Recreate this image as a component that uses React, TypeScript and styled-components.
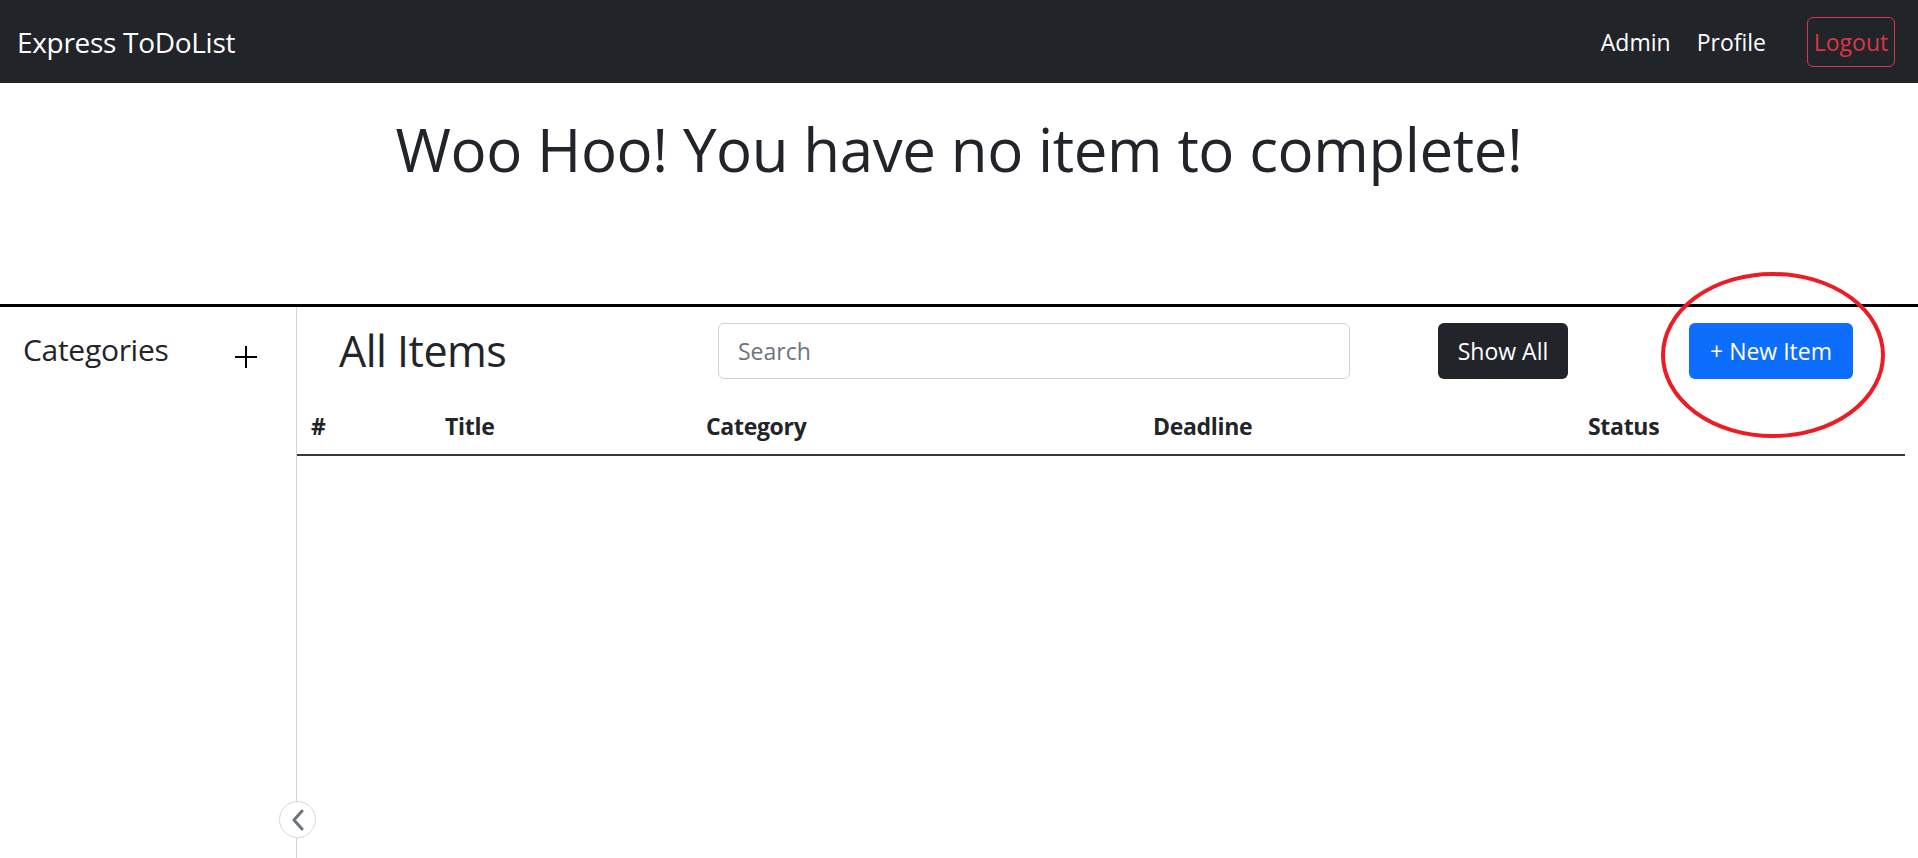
import React from 'react';
import styled, { createGlobalStyle } from 'styled-components';

const GlobalStyle = createGlobalStyle`
  html, body {
    margin: 0;
    padding: 0;
    background: #fff;
    overflow: hidden;
  }
  body {
    font-family: "Open Sans", "Noto Sans", sans-serif;
    color: #212529;
  }
  * {
    box-sizing: border-box;
  }
`;

const Navbar = styled.nav`
  height: 83px;
  background: #212529;
  display: flex;
  align-items: center;
  justify-content: space-between;
  padding: 0 23px 0 17px;
`;

const Brand = styled.a`
  color: #fff;
  font-size: 28px;
  letter-spacing: -0.3px;
  text-decoration: none;
`;

const NavLinks = styled.div`
  display: flex;
  align-items: center;
`;

const NavLink = styled.a<{ $gap: number }>`
  color: #fff;
  font-size: 23px;
  text-decoration: none;
  margin-right: ${(p) => p.$gap}px;
`;

const LogoutButton = styled.button`
  width: 88px;
  height: 50px;
  background: transparent;
  border: 1px solid #dc3545;
  border-radius: 6px;
  color: #dc3545;
  font-family: inherit;
  font-size: 23px;
  padding: 0;
`;

const Hero = styled.header`
  height: 221px;
  padding-top: 30px;
  text-align: center;
`;

const Headline = styled.h1`
  margin: 0;
  font-size: 60px;
  font-weight: 500;
  line-height: 72px;
  letter-spacing: -0.4px;
`;

const Divider = styled.hr`
  margin: 0;
  border: none;
  height: 3px;
  background: #000;
`;

const Workspace = styled.div`
  display: flex;
  height: calc(100vh - 307px);
`;

const Sidebar = styled.aside`
  position: relative;
  width: 297px;
  flex-shrink: 0;
  border-right: 1px solid #d4d4d4;
`;

const SidebarHeader = styled.div`
  display: flex;
  align-items: center;
  justify-content: space-between;
  padding: 25px 39px 0 23px;
`;

const SidebarTitle = styled.h5`
  margin: 0;
  font-size: 30px;
  font-weight: 500;
  line-height: 36px;
  letter-spacing: -0.3px;
`;

const AddButton = styled.button`
  display: flex;
  background: none;
  border: none;
  padding: 0;
  margin-top: 14px;
  color: #000;
`;

const CollapseToggle = styled.button`
  position: absolute;
  right: -20px;
  bottom: 20px;
  width: 37px;
  height: 37px;
  border-radius: 50%;
  border: 1px solid #d8d8d8;
  background: #fff;
  display: flex;
  align-items: center;
  justify-content: center;
  padding: 0;
`;

const Main = styled.main`
  flex: 1;
  padding-right: 13px;
`;

const Toolbar = styled.div`
  display: flex;
  align-items: center;
  padding-top: 16px;
`;

const PageTitle = styled.h2`
  margin: 0;
  width: 421px;
  padding-left: 42px;
  font-size: 43px;
  font-weight: 500;
  line-height: 54px;
  letter-spacing: -0.5px;
`;

const SearchInput = styled.input`
  width: 632px;
  height: 56px;
  border: 1px solid #ced4da;
  border-radius: 6px;
  padding: 0 19px;
  font-family: inherit;
  font-size: 23px;
  color: #212529;
  outline: none;
  &::placeholder {
    color: #6c757d;
  }
`;

const ActionButton = styled.button<{ $variant: 'dark' | 'primary'; $width: number; $offset: number }>`
  width: ${(p) => p.$width}px;
  height: 56px;
  margin-left: ${(p) => p.$offset}px;
  border: none;
  border-radius: 6px;
  background: ${(p) => (p.$variant === 'dark' ? '#212529' : '#0d6efd')};
  color: #fff;
  font-family: inherit;
  font-size: 23px;
  padding: 0;
`;

const Highlight = styled.div`
  position: relative;
  display: flex;
`;

const Circled = styled.svg`
  position: absolute;
  left: 92px;
  top: -52px;
  pointer-events: none;
`;

const Table = styled.div`
  margin-top: 17px;
`;

const HeaderRow = styled.div`
  display: grid;
  grid-template-columns: 134px 261px 447px 435px 1fr;
  border-bottom: 2px solid #343a40;
`;

const HeaderCell = styled.div`
  padding: 12px 14px 10px;
  font-size: 23px;
  font-weight: 700;
  line-height: 36px;
  letter-spacing: -0.3px;
`;

const columns = ['#', 'Title', 'Category', 'Deadline', 'Status'];

export default function App() {
  return (
    <>
      <GlobalStyle />
      <Navbar>
        <Brand href="#">Express ToDoList</Brand>
        <NavLinks>
          <NavLink href="#" $gap={26}>Admin</NavLink>
          <NavLink href="#" $gap={41}>Profile</NavLink>
          <LogoutButton>Logout</LogoutButton>
        </NavLinks>
      </Navbar>
      <Hero>
        <Headline>Woo Hoo! You have no item to complete!</Headline>
      </Hero>
      <Divider />
      <Workspace>
        <Sidebar>
          <SidebarHeader>
            <SidebarTitle>Categories</SidebarTitle>
            <AddButton aria-label="Add category">
              <svg width="22" height="22" viewBox="0 0 22 22">
                <path d="M11 0v22M0 11h22" stroke="#000" strokeWidth="2" />
              </svg>
            </AddButton>
          </SidebarHeader>
          <CollapseToggle aria-label="Collapse">
            <svg width="14" height="22" viewBox="0 0 14 22">
              <path d="M11 2L3 11l8 9" fill="none" stroke="#6c757d" strokeWidth="3" strokeLinecap="round" strokeLinejoin="round" />
            </svg>
          </CollapseToggle>
        </Sidebar>
        <Main>
          <Toolbar>
            <PageTitle>All Items</PageTitle>
            <SearchInput placeholder="Search" />
            <ActionButton $variant="dark" $width={130} $offset={88}>Show All</ActionButton>
            <Highlight>
              <ActionButton $variant="primary" $width={164} $offset={121}>+ New Item</ActionButton>
              <Circled width="230" height="170" viewBox="0 0 230 170">
                <ellipse cx="113" cy="84" rx="110" ry="81" fill="none" stroke="#ed1c24" strokeWidth="4" />
              </Circled>
            </Highlight>
          </Toolbar>
          <Table>
            <HeaderRow>
              {columns.map((c) => (
                <HeaderCell key={c}>{c}</HeaderCell>
              ))}
            </HeaderRow>
          </Table>
        </Main>
      </Workspace>
    </>
  );
}
